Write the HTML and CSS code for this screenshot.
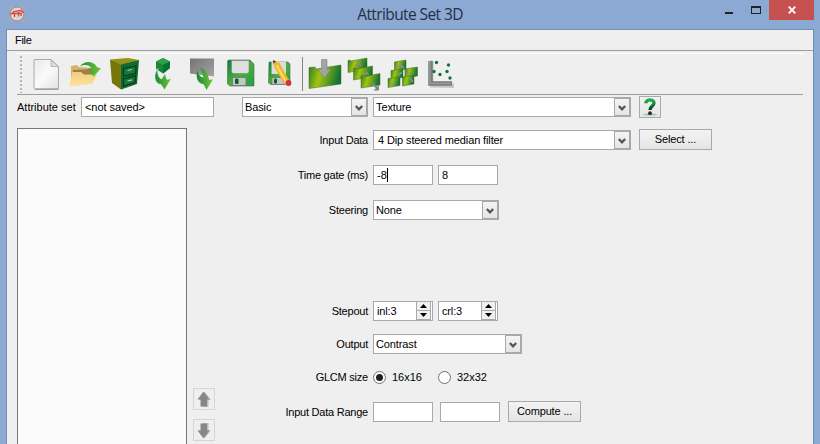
FILE: index.html
```html
<!DOCTYPE html>
<html lang="en">
<head>
<meta charset="utf-8">
<title>Attribute Set 3D</title>
<link rel="stylesheet" href="styles.css">
</head>
<body>
<svg class="defs" width="0" height="0">
  <defs>
    <linearGradient id="leaf" x1="0" y1="0" x2="1" y2="0"><stop offset="0" stop-color="#178a35"/><stop offset="1" stop-color="#76c63c"/></linearGradient>
    <linearGradient id="leafr" x1="0" y1="0" x2="1" y2="1"><stop offset="0" stop-color="#078044"/><stop offset=".5" stop-color="#4bad3a"/><stop offset="1" stop-color="#22a04a"/></linearGradient>
    <linearGradient id="panel" x1="0" y1="0" x2="1" y2=".2"><stop offset="0" stop-color="#2d7c27"/><stop offset=".4" stop-color="#a3c40c"/><stop offset="1" stop-color="#137434"/></linearGradient>
    <linearGradient id="paper" x1="0" y1="0" x2="1" y2="1"><stop offset="0" stop-color="#e9e9e9"/><stop offset=".5" stop-color="#fafafa"/><stop offset="1" stop-color="#e2e2e2"/></linearGradient>
    <linearGradient id="gray" x1="0" y1="0" x2="1" y2="1"><stop offset="0" stop-color="#747474"/><stop offset="1" stop-color="#a4a4a4"/></linearGradient>
    <linearGradient id="fold" x1="0" y1="0" x2="0" y2="1"><stop offset="0" stop-color="#f1cf80"/><stop offset="1" stop-color="#fbe39a"/></linearGradient>
    <linearGradient id="help" x1="0" y1="0" x2="0" y2="1"><stop offset="0" stop-color="#22b050"/><stop offset="1" stop-color="#0a3d24"/></linearGradient>
    <symbol id="chev" viewBox="0 0 8 7"><path d="M.8 1 4 4.400 7.200 1" fill="none" stroke="#555" stroke-width="2.300"/></symbol>
    <symbol id="up" viewBox="0 0 14 17"><path d="M8 1 14 9H11.500V16H5.500V9H2Z" fill="#bcbcbc"/><path d="M6.500 .5 12.500 8.500H10V15.500H3.500V8.500H.5Z" fill="#858985"/></symbol>
  </defs>
</svg>
<div class="window">
  <header class="titlebar">
    <svg class="logo" width="16" height="16" viewBox="0 0 16 16"><rect width="16" height="16" rx="2" fill="#a5a9b4"/><circle cx="8" cy="8" r="7" fill="#d9d6d5" stroke="#8f8d90"/><path d="M1.500 8.500 5 5.500 12 4.500 14.500 7M3.500 7.500H13M5.500 8V11M9.500 6V10.500M12 8V10" stroke="#df4445" stroke-width="1.300" fill="none"/></svg>
    <h1>Attribute Set 3D</h1>
    <div class="controls">
      <i class="min"></i><i class="max"></i>
      <span class="close"><svg width="8" height="8" viewBox="0 0 8 8"><path d="M.7.7 7.300 7.300M7.300.7.7 7.300" stroke="#fff" stroke-width="1.800"/></svg></span>
    </div>
  </header>
  <main class="client">
    <nav class="menu">File</nav>
    <div class="toolbar">
      <i class="grip"></i>
      <svg class="tool" viewBox="27 54 39 40"><path d="M34 60.500Q34 59.500 35 59.500H51L58.500 66.500V88Q58.500 89 57.500 89H35Q34 89 34 88Z" fill="url(#paper)" stroke="#aaa"/><path d="M35 89.200H58.500" stroke="#8e8e8e"/><path d="M51 60V66.500H58.500Z" fill="#ddd" stroke="#aaa" stroke-width=".8"/></svg>
      <svg class="tool" viewBox="66 54 39 40"><path d="M71 66 77 65 79 67 94 68 93 78H71Z" fill="#d9b365"/><path d="M73 70 93 69 92 77H73Z" fill="#9c8048"/><path d="M69 86.500 72.500 72H81L84 74.500H97L92.500 84Z" fill="url(#fold)"/><path d="M79.500 66.500C84 60.500 93 60 97 67L101 68.500 93.500 76.500 88 68.500 91.500 68.200C89 64.500 84 64 79.500 66.500Z" fill="url(#leaf)"/></svg>
      <svg class="tool" viewBox="105 54 39 40"><path d="M110 59.500 128 58 139 60 121 65Z" fill="#94931a"/><path d="M110 59.500 121 64.500V89.500L112 83Z" fill="#777408"/><path d="M121 64.500 139 60 137 84 121 89.500Z" fill="#10692f"/><path d="M123.500 68.500 136 66 135.500 73.500 123.500 76Z M123.500 79 135.500 76 135 82.500 123.500 86Z" fill="#16773b" stroke="#063d1b" stroke-width="1.200"/><path d="M127.500 70.500 132 69.500M127.500 81 132 79.800" stroke="#b5c4b5" stroke-width="1.200"/></svg>
      <svg class="tool" viewBox="144 54 39 40"><path d="M163 58 170 61.500V68L163 73.500 156 69V61.500Z" fill="#16883a"/><path d="M163 58 170 61.500 163 65 156 61.500Z" fill="#2ba24b"/><path d="M163 65 170 61.500V68L163 73.500Z" fill="#087132"/><path d="M158 68.500C153 74 154 84 161 84.500L164.500 90 171.500 78.500 167 79.500 165 73.500 161.500 79C158.500 78 157 73 158 68.500Z" fill="url(#leaf)" stroke="#f4f8f2" stroke-width=".5"/></svg>
      <svg class="tool" viewBox="183 54 39 40"><path d="M190 58.500H214V76.500L190 73.500Z" fill="url(#gray)"/><path d="M197.500 70C195 77 198 84 203.500 84L206.500 90 213 79.500 209 79.700C208.500 74 205 69.500 200.500 67L203.500 77.500C200 77 198 74 197.500 70Z" fill="url(#leaf)"/></svg>
      <svg class="tool" viewBox="222 54 39 40"><path d="M228.500 60H250L254 64V86H230L227.500 84V61Z" fill="url(#leafr)" stroke="#4a7350" stroke-width=".6"/><path d="M231.500 60.500H249V71.500Q249 73.500 247 73.500H233.500Q231.500 73.500 231.500 71.500Z" fill="#dedede" stroke="#777" stroke-width=".5"/><rect x="232.500" y="77.500" width="13.500" height="8" rx="1" fill="#c4c7c5" stroke="#66716a" stroke-width=".7"/><rect x="235" y="78.500" width="3.500" height="5.500" rx="1.300" fill="#075d2c"/></svg>
      <svg class="tool" viewBox="261 54 39 40"><path d="M269 62H288L290 64V84.500H271L268.500 83Z" fill="url(#leafr)" stroke="#4a7350" stroke-width=".6"/><path d="M271.500 62H286V74H271.500Z" fill="#dcdcdc"/><rect x="272" y="77.500" width="12" height="7" fill="#c4c7c5" stroke="#66716a" stroke-width=".7"/><rect x="274" y="78.500" width="3" height="5" rx="1.300" fill="#075d2c"/><path d="M273 60 279.500 63 289 80 284 83.500 274 66.500Z" fill="#eeb52e"/><path d="M276.500 65 286 82" stroke="#ffdd69" stroke-width="2"/><path d="M273 60 276 61.500 273.500 63.700Z" fill="#493c2b"/><path d="M284 83 288.500 79.500 289.500 81.500 285.500 85Z" fill="#d4d4d4"/><circle cx="288.500" cy="83" r="2.900" fill="#d52f3a"/></svg>
      <i class="sep"></i>
      <svg class="tool" viewBox="305 54 39 40"><path d="M309 67.500 315 67 316 69 341 65V84L309 88.500Z" fill="url(#panel)" stroke="#3a6a2d" stroke-width=".5"/><path d="M321.500 59.500H327V69.500H330.500L324.500 78 318 69.500H321.500Z" fill="#a0a59e" stroke="#7f857d" stroke-width=".6"/></svg>
      <svg class="tool" viewBox="344 54 39 40"><g fill="url(#panel)" stroke="#3b6d28" stroke-width=".5"><path d="M348 60.500 350 60 351 61 367 58V69L348 72.500Z"/><path d="M353.500 68.500 355.500 68 357 69 372.500 66V76.500L353.500 80Z"/><path d="M361 76 364 75.500 365 76.500 380 73.500V85L361 88Z"/></g><path d="M356 66 359 63 361 66M364 75 366.500 72.500 368.500 75" fill="none" stroke="#858a84" stroke-width="1.800"/><path d="M372 83 377 88" stroke="#818581" stroke-width="2"/><path d="M379 85V90.500H373.500Z" fill="#818581"/></svg>
      <svg class="tool" viewBox="383 54 39 40"><g fill="url(#panel)" stroke="#3b6d28" stroke-width=".5"><path d="M394.500 62 406 60V69L394.500 71Z"/><path d="M391 70.500 403 69V77.500L391 79Z"/><path d="M405 69 417.500 67V76L405 78Z"/><path d="M388 78.500 400 77V85.500L388 87.500Z"/><path d="M402.500 77 414 75V84L402.500 86Z"/></g><path d="M397 68 400.500 65.500 404 68M398 75 402 72.500M407 74 411 73M391 85 395 82M410 78 413 82" fill="none" stroke="#8b908b" stroke-width="1.800"/></svg>
      <svg class="tool" viewBox="422 54 39 40"><path d="M430 60 433.500 61V82L454 83.500V88L430 87.500Z" fill="#aaa" opacity=".6"/><path d="M430.500 61V83.500H452" fill="none" stroke="#777b78" stroke-width="4.500"/><path d="M430 61V83.500H451" fill="none" stroke="#999e9a" stroke-width="1.500"/><g fill="#0d7440"><circle cx="436.500" cy="62.500" r="1.700"/><circle cx="448.500" cy="65" r="1.700"/><circle cx="434" cy="71.500" r="1.700"/><circle cx="447" cy="71.500" r="1.700"/><circle cx="440" cy="74.500" r="1.700"/><circle cx="450" cy="78" r="1.700"/></g></svg>
    </div>
    <div class="setrow">
      <span class="lab">Attribute set</span><div class="field name">&lt;not saved&gt;</div>
      <div class="field combo basic"><span>Basic</span><b><svg><use href="#chev"/></svg></b></div>
      <div class="field combo wide"><span>Texture</span><b><svg><use href="#chev"/></svg></b></div>
      <div class="btn help"><svg width="14" height="18" viewBox="0 0 14 18"><ellipse cx="7" cy="16.500" rx="7" ry="1" fill="#b4b8b5"/><path d="M2.800 5.200C2.800 .8 11 .8 11 5 11 8.300 7 8 7 12" fill="none" stroke="url(#help)" stroke-width="3.300"/><circle cx="7" cy="15.200" r="1.900" fill="#0a3321"/></svg></div>
    </div>
    <div class="work">
      <div class="list"></div>
      <div class="movers">
        <div class="mover"><svg width="14" height="17"><use href="#up"/></svg></div>
        <div class="mover down"><svg width="14" height="17"><use href="#up"/></svg></div>
      </div>
      <div class="form">
        <div class="row input"><label>Input Data</label><div class="field combo wide"><span class="inset">4 Dip steered median filter</span><b><svg><use href="#chev"/></svg></b></div><div class="btn select">Select ...</div></div>
        <div class="row gate"><label>Time gate (ms)</label><div class="field num">-8<i class="caret"></i></div><div class="field num">8</div></div>
        <div class="row steer"><label>Steering</label><div class="field combo short"><span>None</span><b><svg><use href="#chev"/></svg></b></div></div>
        <div class="row step"><label>Stepout</label>
          <div class="field num spin"><span>inl:3</span><div class="arrows"><i class="inc"></i><i class="dec"></i></div></div>
          <div class="field num spin"><span>crl:3</span><div class="arrows"><i class="inc"></i><i class="dec"></i></div></div></div>
        <div class="row output"><label>Output</label><div class="field combo medium"><span>Contrast</span><b><svg><use href="#chev"/></svg></b></div></div>
        <div class="row glcm"><label>GLCM size</label><i class="radio on"></i><span class="opt">16x16</span><i class="radio"></i><span class="opt">32x32</span></div>
        <div class="row range"><label>Input Data Range</label><div class="field num"></div><div class="field num"></div><div class="btn compute">Compute ...</div></div>
      </div>
    </div>
  </main>
</div>
</body>
</html>
```
FILE: styles.css
```css
* { box-sizing: border-box; }
body { margin: 0; overflow: hidden; background: #8ca9d4; color: #000; font: 11px/18px "Liberation Sans", Arial, sans-serif; }
svg { display: block; flex: none; }
.defs { position: absolute; }
.window { width: 820px; height: 444px; display: flex; flex-direction: column; overflow: hidden; }
.titlebar { height: 29px; flex: none; display: grid; grid-template-columns: 130px 1fr 130px; padding-right: 6px; }
.logo { margin: 6px 0 0 9px; }
h1 { margin: 0; padding-left: 6px; font: 15.5px/29px "Open Sans", "Noto Sans", sans-serif; text-align: center; color: #25303f; letter-spacing: -.6px; }
.controls { display: flex; justify-content: flex-end; align-items: flex-start; }
.min { width: 8px; height: 2px; background: #222; margin: 12px 18px 0 0; }
.max { width: 10px; height: 8px; border: 1px solid #222; border-top-width: 2px; margin: 6px 8px 0 0; }
.close { width: 45px; height: 20px; background: #c75050; display: grid; place-items: center; }
.client { flex: 1; margin: 0 6px; border: 1px solid #708fb6; border-bottom: 0; background: #efefef; min-height: 0; }
.menu { height: 21px; padding-left: 8px; line-height: 21px; letter-spacing: -.3px; border-bottom: 1px solid #9d9da0; }
.toolbar { height: 42px; margin: 2px 10px 0; border-top: 1px solid #fff; border-bottom: 1px solid #9d9da0; display: flex; }
.grip { width: 2px; height: 37px; margin: 2px 5px 0 3px; background: repeating-linear-gradient(#b4b4b4 0 2px, transparent 2px 4px); }
.tool { width: 39px; height: 40px; }
.sep { width: 1px; height: 34px; background: #858585; margin: 3px 2px 0; }
.setrow { display: flex; align-items: center; height: 22px; margin: 1px 0 0 10px; }
.lab { width: 64px; white-space: nowrap; }
.field { height: 20px; flex: none; border: 1px solid #a8a8ad; background: #fff; padding-left: 4px; display: flex; align-items: center; white-space: nowrap; }
.name { width: 133px; margin-right: 28px; padding-left: 3px; letter-spacing: -.05px; }
.combo { padding-left: 2px; justify-content: space-between; letter-spacing: -.12px; }
.combo b { width: 16px; height: 18px; border: 1px solid #a8a8ad; background: linear-gradient(#f4f4f4, #e5e5e5); display: grid; place-items: center; }
.combo b svg { width: 8px; height: 7px; margin-top: 2px; }
.inset { padding-left: 2px; }
.basic { width: 126px; margin-right: 5px; }
.wide { width: 258px; margin-right: 8px; }
.short { width: 126px; }
.medium { width: 149px; }
.btn { border: 1px solid #a8a8ad; background: linear-gradient(#f3f3f3, #e5e5e5); height: 21px; width: 73px; line-height: 19px; text-align: center; letter-spacing: -.15px; }
.help { width: 22px; height: 22px; display: grid; place-items: center; }
.work { display: flex; height: 334px; margin: 10px 0 0 10px; }
.list { width: 170px; border: 1px solid #77757f; background: #fbfbfb; }
.movers { width: 22px; margin: 260px 0 0 6px; display: flex; flex-direction: column; gap: 9px; }
.mover { width: 22px; height: 22px; border: 1px solid #d5d5d5; display: grid; place-items: center; }
.down svg { transform: scaleY(-1); }
.form { margin-left: 55px; }
.row { display: flex; height: 22px; align-items: center; }
.row label { width: 98px; margin-right: 5px; text-align: right; white-space: nowrap; letter-spacing: -.23px; }
.input { margin-top: 1px; }
.select { margin-top: -1px; }
.gate, .steer { margin-top: 13px; }
.step { margin-top: 79px; }
.output { margin-top: 11px; }
.glcm { margin-top: 11px; }
.range { margin-top: 13px; }
.num { width: 60px; margin-right: 5px; padding-left: 3px; }
.range .num { margin-right: 7px; }
.range .compute { margin: -1px 0 0 1px; }
.caret { width: 1px; height: 14px; background: #000; }
.spin { justify-content: space-between; letter-spacing: -.15px; }
.arrows { width: 15px; height: 18px; border: 1px solid #a8a8ad; border-width: 0 1px 1px; margin-right: 1px; background: #f0f0f0; display: grid; grid-template-rows: 9px 8px; }
.arrows i { display: grid; place-items: center; }
.inc { border-bottom: 1px solid #a8a8ad; }
.arrows i::before { content: ""; width: 7px; height: 4px; background: #000; clip-path: polygon(50% 0, 100% 100%, 0 100%); }
.arrows .dec::before { clip-path: polygon(0 0, 100% 0, 50% 100%); }
.radio { width: 13px; height: 13px; border: 1px solid #707070; border-radius: 50%; background: #fff; display: grid; place-items: center; }
.on::before { content: ""; width: 7px; height: 7px; border-radius: 50%; background: #1e1e1e; }
.opt { width: 46px; margin-left: 6px; }
```
